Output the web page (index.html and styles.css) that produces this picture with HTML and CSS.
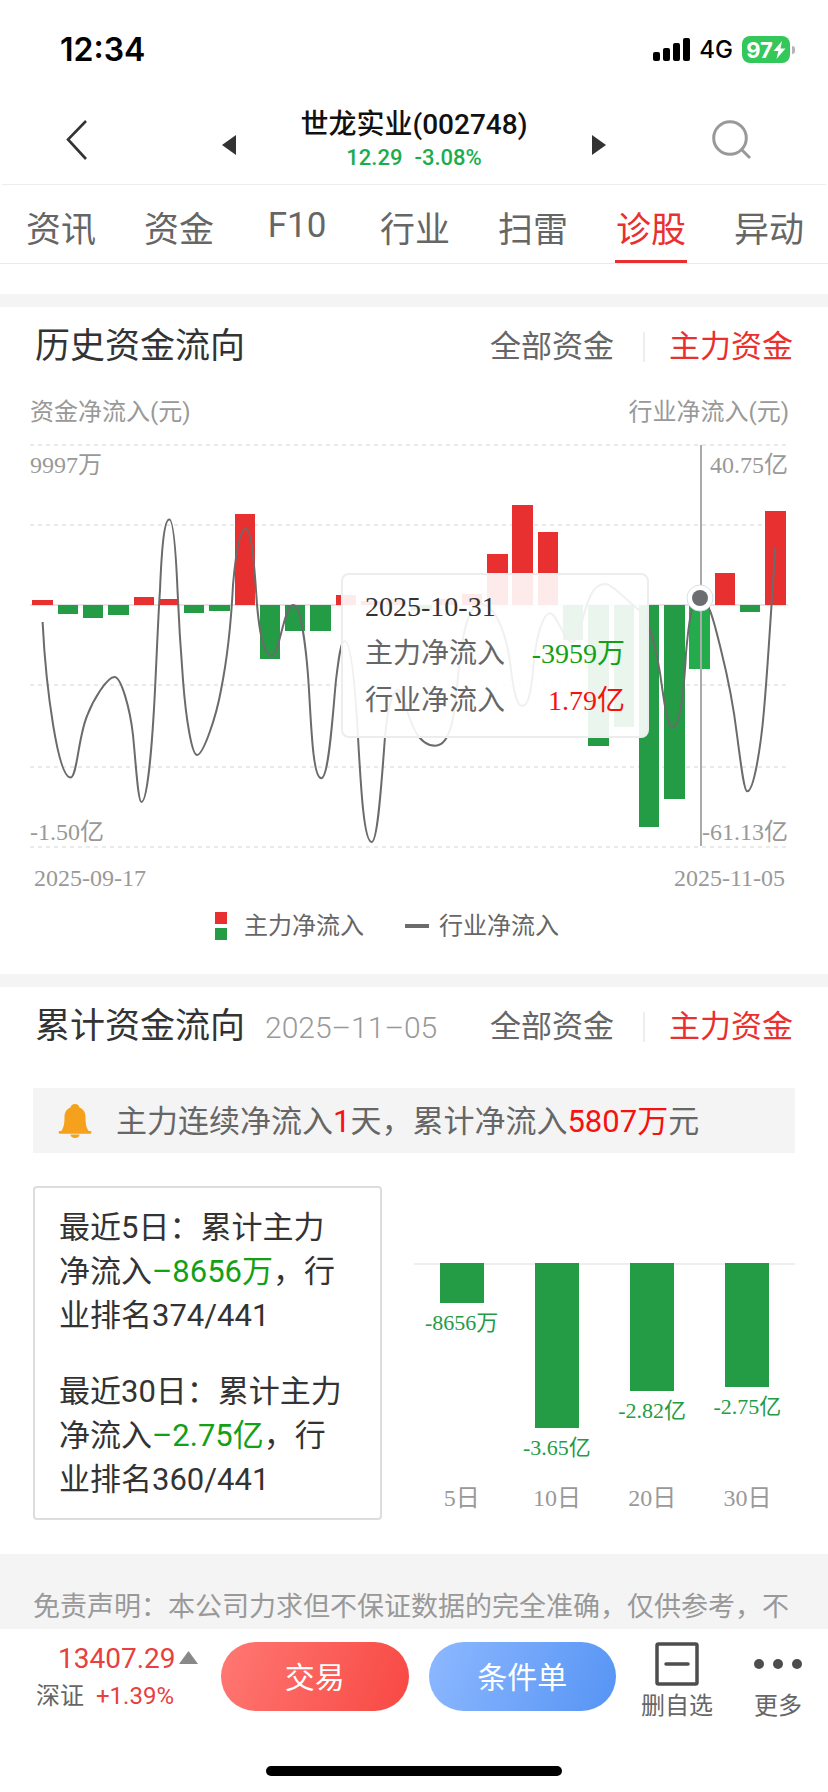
FILE: index.html
```html
<!DOCTYPE html>
<html lang="zh-CN">
<head>
<meta charset="utf-8">
<meta name="viewport" content="width=device-width, initial-scale=1">
<title>世龙实业(002748)</title>
<link rel="stylesheet" href="styles.css">
</head>
<body>
<div class="screen">
  <div class="status">
    <time class="clock">12:34</time>
    <div class="status-icons">
      <svg width="38" height="24" viewBox="0 0 38 24" aria-hidden="true">
        <rect x="0" y="14" width="7" height="9" rx="2"/><rect x="10" y="10" width="7" height="13" rx="2"/><rect x="20" y="5" width="7" height="18" rx="2"/><rect x="30" y="0" width="7" height="23" rx="2"/>
      </svg>
      <span class="network">4G</span>
      <span class="battery"><span>97</span><svg width="13" height="18" viewBox="0 0 13 18" aria-hidden="true"><path d="M9 0 0.500 10h4.800L3.500 18 12.500 7.500H7.500z" fill="#fff"/></svg></span>
    </div>
  </div>

  <header class="titlebar">
    <button class="icon-btn back" aria-label="返回"><svg width="24" height="42" viewBox="0 0 24 42"><path d="M22 2 4 20.500 22 40" fill="none" stroke="#333" stroke-width="2.600"/></svg></button>
    <div class="stock">
      <button class="icon-btn" aria-label="上一只"><svg width="14" height="20" viewBox="0 0 14 20"><path d="M14 0v20L0 10z" fill="#333"/></svg></button>
      <div class="stock-name">
        <h1>世龙实业(002748)</h1>
        <p><span>12.29</span><span>-3.08%</span></p>
      </div>
      <button class="icon-btn" aria-label="下一只"><svg width="14" height="20" viewBox="0 0 14 20"><path d="M0 0v20l14-10z" fill="#333"/></svg></button>
    </div>
    <button class="icon-btn search" aria-label="搜索"><svg width="40" height="40" viewBox="0 0 40 40"><g fill="none" stroke="#999" stroke-width="3"><circle cx="18" cy="18" r="16.300"/><path d="M29.500 29.500 38 38"/></g></svg></button>
  </header>

  <nav class="tabs">
    <a href="#">资讯</a><a href="#">资金</a><a href="#" class="latin">F10</a><a href="#">行业</a><a href="#">扫雷</a><a href="#" class="active">诊股</a><a href="#">异动</a>
  </nav>

  <main>
    <section class="panel">
      <div class="panel-head">
        <h2>历史资金流向</h2>
        <div class="switch"><button>全部资金</button><button class="on">主力资金</button></div>
      </div>
      <div class="axis-names"><span>资金净流入(元)</span><span>行业净流入(元)</span></div>
      <div class="chart">
        <svg viewBox="30 440 758 452" role="img" aria-label="历史资金流向">
          <g stroke="#eaeaea" stroke-width="2" stroke-dasharray="4 4">
            <path d="M30 445h758M30 525h758M30 685h758M30 767h758M30 847h758"/>
          </g>
          <path d="M30 605h758" stroke="#e4e4e8" stroke-width="2"/>
          <g fill="#e83030">
            <rect x="32" y="600" width="21" height="5"/><rect x="134" y="597" width="20" height="8"/><rect x="159" y="599" width="20" height="6"/>
            <rect x="235" y="514" width="20" height="91"/><rect x="336" y="595" width="20" height="10"/><rect x="361" y="601" width="20" height="4"/><rect x="386" y="599" width="20" height="6"/>
            <rect x="437" y="599" width="20" height="6"/><rect x="462" y="594" width="20" height="11"/><rect x="487" y="554" width="21" height="51"/><rect x="512" y="505" width="21" height="100"/><rect x="538" y="532" width="20" height="73"/>
            <rect x="715" y="573" width="20" height="32"/><rect x="765" y="511" width="21" height="94"/>
          </g>
          <g fill="#249c46">
            <rect x="58" y="605" width="20" height="9"/><rect x="83" y="605" width="20" height="13"/><rect x="108" y="605" width="21" height="10"/><rect x="184" y="605" width="20" height="8"/><rect x="209" y="605" width="21" height="6"/>
            <rect x="260" y="605" width="20" height="54"/><rect x="285" y="605" width="20" height="26"/><rect x="310" y="605" width="21" height="26"/><rect x="411" y="605" width="21" height="5"/>
            <rect x="563" y="605" width="20" height="35"/><rect x="588" y="605" width="21" height="141"/><rect x="614" y="605" width="20" height="122"/><rect x="639" y="605" width="20" height="222"/><rect x="664" y="605" width="21" height="194"/>
            <rect x="689" y="605" width="21" height="64" fill="#24ac4c"/><rect x="740" y="605" width="20" height="7"/>
          </g>
          <path fill="none" stroke="#6b6b6b" stroke-width="2" d="M42.600 622C46 690 58 777.500 70.600 777.500C77 777.500 78 738 87 716C93 700 107 677 114.600 677C121 677 130 708 133 735C136 765 138 802 141.500 802C147 802 152 750 155 690C157 650 158 620 160 590C162 540 165 519.500 169.300 519.500C173.500 519.500 176 555 177.500 590C179 625 181 655 183 680C186 720 192 755 197 755C203 755 216 718 221 690C227 660 231 625 233 585C236 550 240 528.700 246 528.700C251 528.700 254 560 256 590C258 625 263 656 272 656C279 656 284 605 293.300 605C301 605 306 650 308 675C311 715 312 778.300 321.300 778.300C329 778.300 333 710 336 680C339 655 341 641 344.700 641C352 641 356 700 358 737C361 790 364 842 371.700 842C378 842 382 775 385 737C388 705 393 690 398 690C406 690 408 745.700 435.300 745.700C452 745.700 455 710 458 677C461 640 468 604 480 604C497 604 508 640 511 670C514 694 517 706 522.300 706C530 706 532 682 534 660C537 632 544 613.300 550 613.300C557 613.300 564 641.700 572 641.700C584 641.700 582 584 605 584C612 584 624 598 639 610C650 620 656 650 660 673C664 700 667 727.300 672.700 727.300C680 727.300 684 690 686 653C689 620 692 598 699.700 598C709 598 715 626 721 650C729 682 734 710 737 735C741 765 744 791.300 747.300 791.300C754 791.300 761 745 764 710C768 665 771 610 775.300 548"/>
          <path d="M701 445v401" stroke="#aaa" stroke-width="2"/>
          <circle cx="700" cy="598" r="13" fill="#fff" stroke="#d5e2ec"/><circle cx="700" cy="598" r="8" fill="#6b6e71"/>
          <g class="chart-text">
            <text x="30" y="473">9997万</text><text x="788" y="473" text-anchor="end">40.75亿</text>
            <text x="30" y="840">-1.50亿</text><text x="788" y="840" text-anchor="end">-61.13亿</text>
            <text x="34" y="886">2025-09-17</text><text x="785" y="886" text-anchor="end">2025-11-05</text>
          </g>
        </svg>
        <div class="tooltip">
          <p class="tip-date">2025-10-31</p>
          <dl>
            <dt>主力净流入</dt><dd class="down">-3959万</dd>
            <dt>行业净流入</dt><dd class="up">1.79亿</dd>
          </dl>
        </div>
      </div>
      <div class="legend">
        <span><i class="key-bars"></i>主力净流入</span>
        <span><i class="key-line"></i>行业净流入</span>
      </div>
    </section>

    <section class="panel">
      <div class="panel-head">
        <h2>累计资金流向</h2><span class="head-date">2025–11–05</span>
        <div class="switch"><button>全部资金</button><button class="on">主力资金</button></div>
      </div>
      <div class="notice">
        <svg width="34" height="34" viewBox="0 0 34 34" aria-hidden="true"><g fill="#f5a11c"><path d="M17 0c2.500 0 4.200 1.500 4.500 3.600C26 5.500 27.500 9 27.500 13c0 7 .8 10.500 3.200 14H32a1.300 1.300 0 0 1 0 2.800H2A1.300 1.300 0 0 1 2 27h1.300c2.400-3.500 3.200-7 3.200-14 0-4 1.500-7.500 6-9.400C12.800 1.500 14.500 0 17 0z"/><path d="M12.500 30.500h9c0 2-1.800 3.500-4.500 3.500s-4.500-1.500-4.500-3.500z"/></g></svg>
        <p>主力连续净流入<b class="up">1</b>天，累计净流入<b class="up">5807万</b>元</p>
      </div>
      <div class="summary">
        <div class="summary-text">
          <p>最近5日：累计主力净流入<b class="down">–8656万</b>，行业排名374/441</p>
          <p>最近30日：累计主力净流入<b class="down">–2.75亿</b>，行业排名360/441</p>
        </div>
        <div class="bars">
          <div class="bar-col"><i style="height:40px"></i><span>-8656万</span><em>5日</em></div>
          <div class="bar-col"><i style="height:165px"></i><span>-3.65亿</span><em>10日</em></div>
          <div class="bar-col"><i style="height:128px"></i><span>-2.82亿</span><em>20日</em></div>
          <div class="bar-col"><i style="height:124px"></i><span>-2.75亿</span><em>30日</em></div>
        </div>
      </div>
    </section>
    <p class="disclaimer">免责声明：本公司力求但不保证数据的完全准确，仅供参考，不</p>
  </main>

  <footer class="dock">
    <div class="dock-row">
      <div class="index">
        <p class="index-value">13407.29<svg width="19" height="13" viewBox="0 0 19 13" aria-hidden="true"><path d="M9.500 0 19 13H0z" fill="#888"/></svg></p>
        <p class="index-change"><span>深证</span><b>+1.39%</b></p>
      </div>
      <button class="pill trade">交易</button>
      <button class="pill order">条件单</button>
      <button class="tool remove"><svg width="44" height="44" viewBox="0 0 44 44" aria-hidden="true"><g fill="none" stroke="#4d4d4d" stroke-width="3.500"><rect x="2" y="2" width="40" height="40" rx="1.500"/><path d="M11 22h22" stroke-linecap="round"/></g></svg><span>删自选</span></button>
      <button class="tool more"><svg width="50" height="44" viewBox="0 0 50 44" aria-hidden="true"><g fill="#4d4d4d"><circle cx="6" cy="22" r="5"/><circle cx="25" cy="22" r="5"/><circle cx="44" cy="22" r="5"/></g></svg><span>更多</span></button>
    </div>
    <div class="home-bar"></div>
  </footer>
</div>
</body>
</html>
```

FILE: styles.css
```css
* { box-sizing: border-box; }
body, h1, h2, p, dl, dd { margin: 0; }
body {
  background: #fff;
  color: #333;
  font-family: Roboto, "Noto Sans CJK SC", sans-serif;
}
button {
  padding: 0;
  border: 0;
  background: none;
  color: inherit;
  font: inherit;
}
svg { display: block; }
a { color: inherit; text-decoration: none; }
b, em, i { font-weight: 400; font-style: normal; }
.up { color: #f5120f; }
.down { color: #14a014; }

.screen { display: flex; flex-direction: column; min-height: 100vh; }

.status {
  display: flex;
  justify-content: space-between;
  align-items: center;
  height: 88px;
  padding: 11px 33px 0 60px;
  color: #000;
  font-family: Inter, sans-serif;
}
.clock { font-size: 32px; font-weight: 600; }
.status-icons { display: flex; align-items: center; }
.network { margin: 0 9px 0 8px; font-size: 24px; font-weight: 500; }
.battery {
  position: relative;
  display: flex;
  align-items: center;
  justify-content: center;
  width: 48px;
  height: 27px;
  margin-right: 5px;
  border-radius: 8px;
  background: #34c759;
  color: #fff;
  font-size: 22px;
  font-weight: 700;
}
.battery::after {
  content: "";
  position: absolute;
  left: 50px;
  top: 10px;
  width: 3px;
  height: 8px;
  border-radius: 0 3px 3px 0;
  background: #b4b4b4;
}

.titlebar {
  display: flex;
  justify-content: space-between;
  align-items: center;
  height: 97px;
  margin: 0 2px;
  padding: 8px 74px 0 62px;
  border-bottom: 1px solid #ededed;
  background: linear-gradient(#ea2f2f, #ea2f2f) 314px 100% / 58px 1px no-repeat;
  background-origin: border-box;
  background-clip: border-box;
}
.stock { display: flex; align-items: center; justify-content: space-between; width: 384px; margin-left: 28px; }
.stock > .icon-btn { padding-top: 9px; }
.stock-name { text-align: center; }
.stock-name h1 { color: #111; font-size: 28px; line-height: 36px; font-weight: 500; }
.stock-name p {
  display: flex;
  justify-content: center;
  gap: 12px;
  color: #1aad50;
  font-size: 22px;
  line-height: 30px;
  font-weight: 500;
}

.tabs {
  display: grid;
  grid-template-columns: repeat(7, 1fr);
  height: 79px;
  padding-left: 2px;
  border-bottom: 1px solid #eaeaea;
  color: #666;
  font-size: 35px;
  line-height: 91px;
}
.tabs a { justify-self: center; height: 78px; padding: 0 1px; }
.tabs .latin { line-height: 82px; }
.tabs .active { border-bottom: 3px solid #ea2f2f; color: #ea2f2f; }

main { padding-top: 30px; }
.panel { border-top: 13px solid #f4f4f4; }
.panel-head {
  display: flex;
  align-items: center;
  height: 78px;
  padding: 2px 35px 0;
}
.panel-head h2 { font-size: 35px; line-height: 50px; font-weight: 400; }
.head-date { margin-left: 20px; color: #999; font-size: 30px; font-weight: 300; }
.switch { display: flex; margin-left: auto; color: #666; font-size: 31px; line-height: 30px; }
.switch .on { margin-left: 29px; padding-left: 24px; border-left: 2px solid #eee; color: #ea2f2f; }

.axis-names {
  display: flex;
  justify-content: space-between;
  padding: 0 39px 0 30px;
  color: #999;
  font-size: 24px;
  line-height: 55px;
}
.chart { position: relative; margin: 0 40px 0 30px; }
.chart > svg { width: 100%; height: auto; }
.chart-text { fill: #999; font: 24px "Liberation Serif", "Noto Sans CJK SC", serif; }
.tooltip {
  position: absolute;
  left: 311px;
  top: 133px;
  width: 308px;
  padding: 8px 22px 12px;
  border: 2px solid #ededed;
  border-radius: 8px;
  background: rgba(255, 255, 255, 0.9);
  font: 28px/47px "Liberation Serif", "Noto Sans CJK SC", serif;
}
.tooltip dl { display: grid; grid-template-columns: auto auto; justify-content: space-between; }
.tooltip dt { color: #666; }
.tooltip dd { text-align: right; }

.legend {
  display: flex;
  justify-content: center;
  gap: 41px;
  padding: 0 54px 14px 0;
  color: #666;
  font-size: 24px;
  line-height: 68px;
}
.legend span { display: flex; align-items: center; }
.key-bars {
  width: 12px;
  height: 28px;
  margin-right: 17px;
  background: linear-gradient(#e83030 12px, #fff 12px, #fff 16px, #249c46 16px);
}
.key-line { width: 24px; height: 4px; margin-right: 10px; background: #6b6b6b; }

.notice {
  display: flex;
  align-items: center;
  gap: 24px;
  height: 65px;
  margin: 23px 33px 33px;
  padding-left: 25px;
  background: #f4f4f4;
  color: #666;
  font-size: 31px;
}
.notice p { padding-bottom: 5px; }
.summary { display: flex; gap: 32px; padding: 0 33px 34px; }
.summary-text {
  display: grid;
  gap: 32px;
  flex: 0 0 349px;
  padding: 18px 32px 16px 24px;
  border: 2px solid #ddd;
  border-radius: 4px;
  font-size: 31px;
  line-height: 44px;
}
.bars {
  display: grid;
  grid-template-columns: repeat(4, 1fr);
  flex: 1;
  margin-top: 77px;
  border-top: 2px solid #eee;
  font-family: "Liberation Serif", "Noto Sans CJK SC", serif;
}
.bar-col { display: flex; flex-direction: column; align-items: center; margin-top: -2px; }
.bar-col i { width: 44px; background: #249c46; }
.bar-col span { color: #249c46; font-size: 22px; line-height: 40px; white-space: nowrap; }
.bar-col em { margin-top: auto; color: #999; font-size: 24px; line-height: 44px; }

.disclaimer {
  height: 75px;
  padding: 31px 33px 0;
  overflow: hidden;
  background: #f4f4f4;
  color: #999;
  font-size: 27px;
  line-height: 44px;
}

.dock { display: flex; flex: 1; flex-direction: column; justify-content: space-between; min-height: 163px; }
.dock-row { display: flex; align-items: flex-start; padding: 13px 25px 0 36px; }
.index { width: 185px; }
.index-value { display: flex; align-items: center; gap: 3px; padding-left: 22px; color: #e8403f; font-size: 28px; line-height: 34px; }
.index-value svg { margin-bottom: 4px; }
.index-change { display: flex; gap: 12px; color: #666; font-size: 24px; line-height: 40px; }
.index-change b { color: #e8403f; }
.pill { flex: 1; height: 69px; padding-bottom: 4px; border-radius: 35px; color: #fff; font-size: 30px; }
.trade { background: linear-gradient(110deg, #ff7873, #f84843); }
.order { margin-left: 20px; background: linear-gradient(110deg, #8db8ff, #5694f4); }
.tool { display: flex; flex-direction: column; align-items: center; color: #666; font-size: 24px; line-height: 40px; }
.remove { margin-left: 25px; }
.more { margin-left: 40px; }
.home-bar { align-self: center; width: 296px; height: 10px; margin-bottom: 16px; border-radius: 5px; background: #000; }
```
